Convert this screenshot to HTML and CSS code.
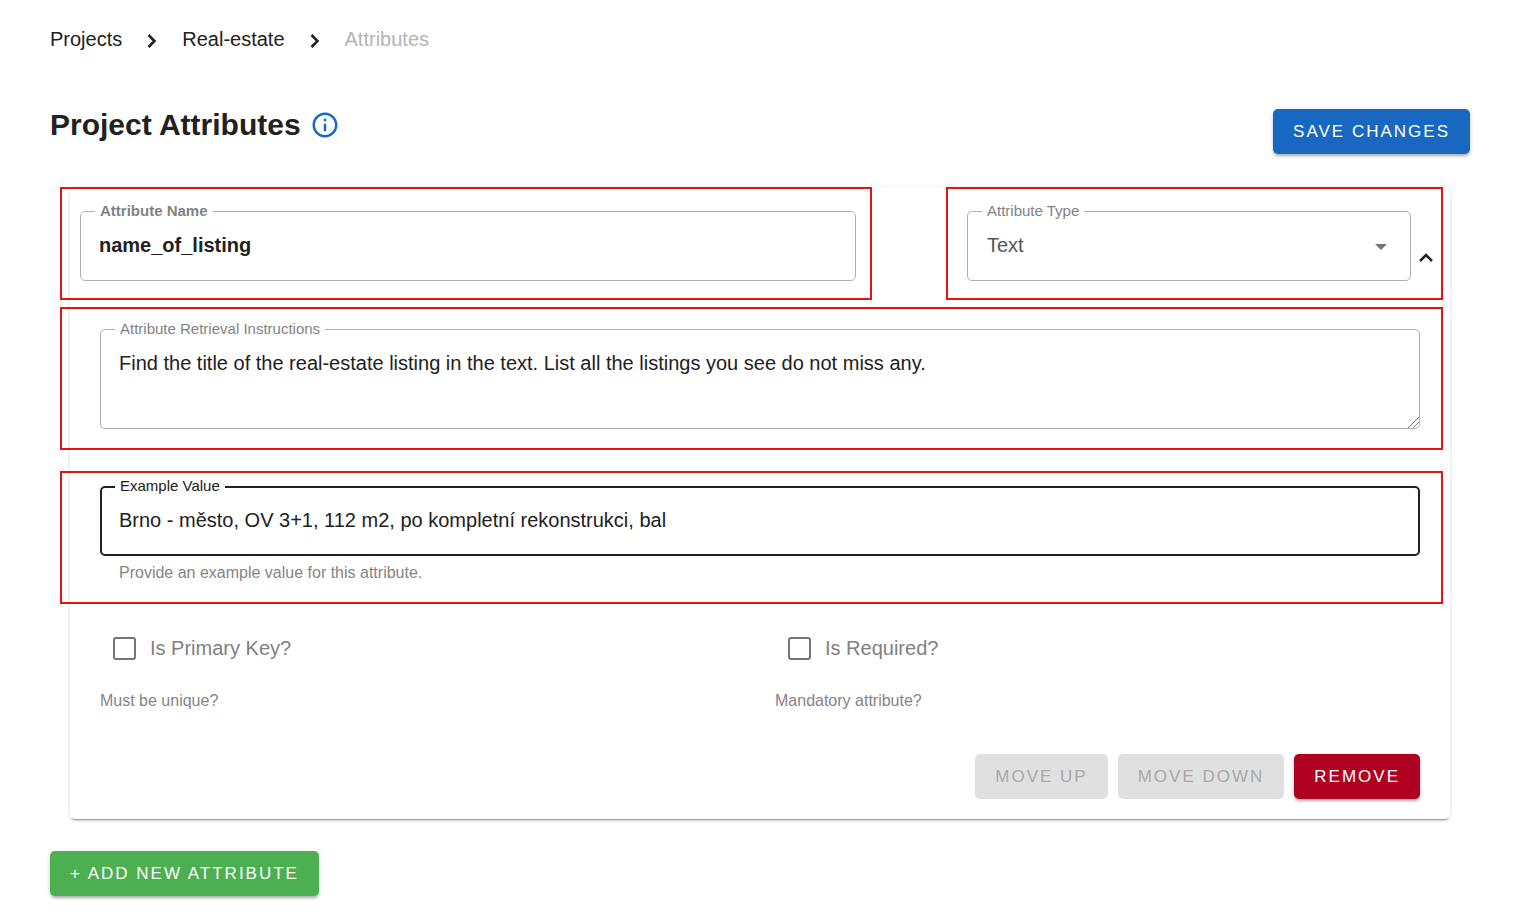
FILE: index.html
```html
<!DOCTYPE html>
<html lang="en">
<head>
<meta charset="utf-8">
<title>Project Attributes</title>
<link rel="stylesheet" href="styles.css">
</head>
<body>
<main class="page">
  <nav class="breadcrumbs" aria-label="Breadcrumb">
    <a href="#projects">Projects</a>
    <svg class="crumb-icon" viewBox="0 0 12 18" aria-hidden="true"><path d="M2.500 5l6 6-6 6"/></svg>
    <a href="#real-estate">Real-estate</a>
    <svg class="crumb-icon" viewBox="0 0 12 18" aria-hidden="true"><path d="M2.500 5l6 6-6 6"/></svg>
    <span class="current">Attributes</span>
  </nav>

  <header class="heading">
    <h1>Project Attributes</h1>
    <button class="info" type="button" aria-label="About attributes">
      <svg viewBox="0 0 24 24" aria-hidden="true"><path d="M11 7h2v2h-2zm0 4h2v6h-2zm1-9C6.480 2 2 6.480 2 12s4.480 10 10 10 10-4.480 10-10S17.520 2 12 2zm0 18c-4.410 0-8-3.590-8-8s3.590-8 8-8 8 3.590 8 8-3.590 8-8 8z"/></svg>
    </button>
    <button class="btn save" type="button">Save changes</button>
  </header>

  <form class="card">
    <div class="top-row">
      <section class="marked">
        <div class="field strong name">
          <label for="name">Attribute Name</label>
          <input id="name" type="text" value="name_of_listing">
        </div>
      </section>
      <section class="marked type-row">
        <div class="field type">
          <label for="type">Attribute Type</label>
          <select id="type"><option>Text</option></select>
          <svg class="arrow" viewBox="0 0 12 6" aria-hidden="true"><path d="M0 0h12l-6 6z"/></svg>
        </div>
        <button class="collapse" type="button" aria-label="Collapse attribute">
          <svg viewBox="0 0 16 16" aria-hidden="true"><path d="M2 11l6-6 6 6"/></svg>
        </button>
      </section>
    </div>

    <section class="marked instructions">
      <div class="field area">
        <label for="instructions">Attribute Retrieval Instructions</label>
        <textarea id="instructions" rows="2">Find the title of the real-estate listing in the text. List all the listings you see do not miss any.</textarea>
        <svg class="grip" viewBox="0 0 12 12" aria-hidden="true"><path d="M1 12L12 1M6 12l6-6"/></svg>
      </div>
    </section>

    <section class="marked example">
      <div class="field active">
        <label for="example">Example Value</label>
        <input id="example" type="text" value="Brno - město, OV 3+1, 112 m2, po kompletní rekonstrukci, bal" aria-describedby="example-help">
      </div>
      <p class="help" id="example-help">Provide an example value for this attribute.</p>
    </section>

    <div class="checks">
      <div>
        <label class="check"><input type="checkbox">Is Primary Key?</label>
        <p class="help">Must be unique?</p>
      </div>
      <div>
        <label class="check"><input type="checkbox">Is Required?</label>
        <p class="help">Mandatory attribute?</p>
      </div>
    </div>

    <div class="actions">
      <button class="btn" type="button" disabled>Move up</button>
      <button class="btn" type="button" disabled>Move down</button>
      <button class="btn remove" type="button">Remove</button>
    </div>
  </form>

  <button class="btn add" type="button">+ Add new attribute</button>
</main>
</body>
</html>
```
FILE: styles.css
```css
* {
  box-sizing: border-box;
}

body {
  margin: 0;
  background: #fff;
  color: #212121;
  font: 20px/24px "Liberation Sans", Arial, sans-serif;
}

button, input, select, textarea {
  font: inherit;
  color: inherit;
}

h1, p {
  margin: 0;
}

.page {
  padding: 27px 52px 24px 50px;
}

.breadcrumbs {
  display: flex;
  align-items: center;
}

.breadcrumbs a {
  color: inherit;
  text-decoration: none;
}

.breadcrumbs .current {
  color: #b4b4b4;
}

.crumb-icon {
  width: 12px;
  height: 18px;
  margin: 0 24px;
  fill: none;
  stroke: #212121;
  stroke-width: 2.500;
}

.heading {
  display: flex;
  align-items: flex-start;
  margin-top: 56px;
}

h1 {
  font-size: 30px;
  line-height: 36px;
}

.info {
  width: 30px;
  height: 30px;
  margin: 3px 0 0 9px;
  padding: 0;
  border: 0;
  background: none;
}

.info svg {
  display: block;
  width: 30px;
  height: 30px;
  fill: #1867c0;
}

.btn {
  height: 45px;
  padding: 0 20px;
  border: 0;
  border-radius: 5px;
  background: #e0e0e0;
  color: #fff;
  font-size: 17px;
  letter-spacing: 2px;
  text-transform: uppercase;
  white-space: nowrap;
  box-shadow: 0 3px 3px -1px rgba(0, 0, 0, .25), 0 1px 5px rgba(0, 0, 0, .15);
}

.btn:disabled {
  color: #a8a8a8;
  box-shadow: none;
}

.save {
  margin: 2px 0 0 auto;
  background: #1867c0;
}

.remove {
  background: #b00020;
}

.add {
  margin-top: 32px;
  background: #4caf50;
}

.card {
  margin: 33px 20px 0;
  padding-bottom: 20px;
  border-radius: 5px;
  box-shadow: 0 3px 2px -2px rgba(0, 0, 0, .4), 0 1px 5px rgba(0, 0, 0, .14);
}

.marked {
  border: 2px solid #e01414;
}

.top-row,
.instructions,
.example {
  margin: 0 7px 0 -10px;
}

.top-row {
  display: grid;
  grid-template-columns: 812fr 497fr;
  gap: 74px;
}

.top-row .marked {
  padding: 22px 14px 17px 18px;
}

.top-row .type-row {
  display: flex;
  align-items: center;
  padding-right: 7px;
  padding-left: 19px;
}

.instructions {
  margin-top: 7px;
  padding: 20px 21px 19px 38px;
}

.example {
  margin-top: 21px;
  padding: 13px 21px 20px 38px;
}

.field {
  position: relative;
  flex: 1;
  display: flex;
  border: 1px solid #b0b0b0;
  border-radius: 5px;
}

.field label {
  position: absolute;
  top: -10px;
  left: 14px;
  padding: 0 5px;
  background: #fff;
  color: #828282;
  font-size: 15px;
  line-height: 18px;
}

.field input,
.field select,
.field textarea {
  flex: 1;
  min-width: 0;
  height: 68px;
  margin: 0;
  padding: 0 18px 2px;
  border: 0;
  outline: 0;
  border-radius: 5px;
  background: transparent;
}

.field.strong {
  font-weight: bold;
}

.field select {
  appearance: none;
  padding-left: 19px;
  color: #555;
}

.arrow {
  position: absolute;
  top: 32px;
  right: 23px;
  width: 12px;
  height: 6px;
  fill: #757575;
  pointer-events: none;
}

.field textarea {
  display: block;
  height: 98px;
  padding: 21px 18px;
  overflow: hidden;
}

.field textarea::-webkit-resizer {
  display: none;
}

.grip {
  position: absolute;
  right: 0;
  bottom: 0;
  width: 12px;
  height: 12px;
  fill: none;
  stroke: #757575;
  pointer-events: none;
}

.field.active {
  border: 2px solid #212121;
}

.field.active input {
  height: 66px;
  padding-left: 17px;
}

.field.active label {
  top: -11px;
  left: 13px;
  color: #212121;
}

.collapse {
  width: 16px;
  height: 16px;
  margin: 24px 0 0 7px;
  padding: 0;
  border: 0;
  background: none;
}

.collapse svg {
  display: block;
  fill: none;
  stroke: #212121;
  stroke-width: 2.500;
}

.help {
  color: #858585;
  font-size: 16px;
  line-height: 18px;
}

.example .help {
  margin: 8px 0 0 19px;
}

.checks {
  display: grid;
  grid-template-columns: 1fr 1fr;
  margin-top: 32px;
  padding-left: 30px;
}

.check {
  display: flex;
  align-items: center;
  gap: 14px;
  padding-left: 13px;
  color: #808080;
}

.check input {
  appearance: none;
  width: 23px;
  height: 23px;
  margin: 0;
  border: 2px solid #757575;
  border-radius: 3px;
}

.checks .help {
  margin-top: 32px;
}

.actions {
  display: flex;
  justify-content: flex-end;
  gap: 10px;
  margin: 44px 30px 0;
}
```
